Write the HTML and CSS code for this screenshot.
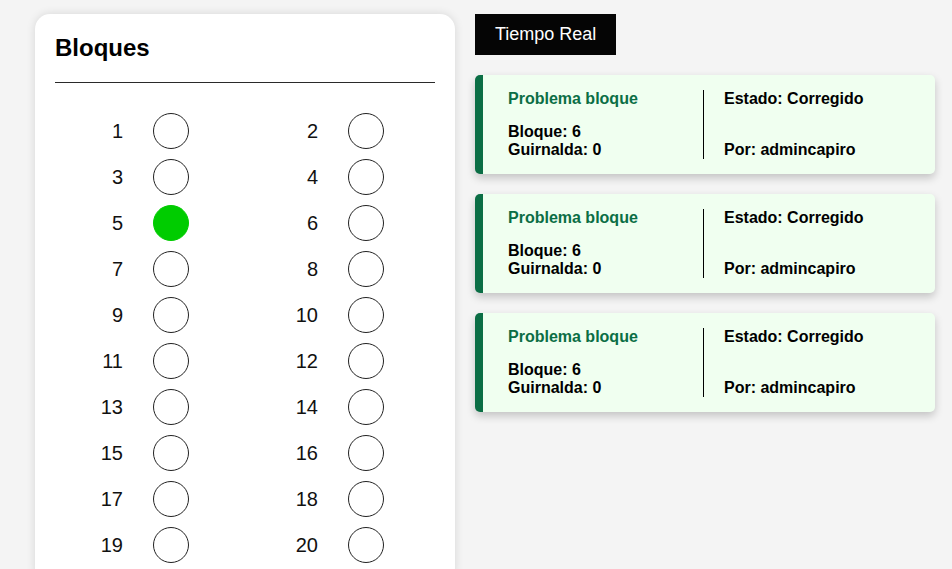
FILE: index.html
```html
<!DOCTYPE html>
<html lang="es">
<head>
<meta charset="utf-8">
<title>Bloques</title>
<link rel="stylesheet" href="styles.css">
</head>
<body>
<div class="page">
  <section class="panel">
    <h2 class="panel-title">Bloques</h2>
    <div class="divider"></div>
    <div class="blocks">
      <div class="block"><span class="num">1</span><span class="dot"></span></div>
      <div class="block"><span class="num">2</span><span class="dot"></span></div>
      <div class="block"><span class="num">3</span><span class="dot"></span></div>
      <div class="block"><span class="num">4</span><span class="dot"></span></div>
      <div class="block"><span class="num">5</span><span class="dot dot-on"></span></div>
      <div class="block"><span class="num">6</span><span class="dot"></span></div>
      <div class="block"><span class="num">7</span><span class="dot"></span></div>
      <div class="block"><span class="num">8</span><span class="dot"></span></div>
      <div class="block"><span class="num">9</span><span class="dot"></span></div>
      <div class="block"><span class="num">10</span><span class="dot"></span></div>
      <div class="block"><span class="num">11</span><span class="dot"></span></div>
      <div class="block"><span class="num">12</span><span class="dot"></span></div>
      <div class="block"><span class="num">13</span><span class="dot"></span></div>
      <div class="block"><span class="num">14</span><span class="dot"></span></div>
      <div class="block"><span class="num">15</span><span class="dot"></span></div>
      <div class="block"><span class="num">16</span><span class="dot"></span></div>
      <div class="block"><span class="num">17</span><span class="dot"></span></div>
      <div class="block"><span class="num">18</span><span class="dot"></span></div>
      <div class="block"><span class="num">19</span><span class="dot"></span></div>
      <div class="block"><span class="num">20</span><span class="dot"></span></div>
    </div>
  </section>
  <section class="feed">
    <button class="live-btn">Tiempo Real</button>
    <div class="card">
      <div class="card-left">
        <p class="card-title">Problema bloque</p>
        <p class="card-line">Bloque: 6</p>
        <p class="card-line">Guirnalda: 0</p>
      </div>
      <div class="card-right">
        <p class="card-line">Estado: Corregido</p>
        <p class="card-line">Por: admincapiro</p>
      </div>
    </div>
    <div class="card">
      <div class="card-left">
        <p class="card-title">Problema bloque</p>
        <p class="card-line">Bloque: 6</p>
        <p class="card-line">Guirnalda: 0</p>
      </div>
      <div class="card-right">
        <p class="card-line">Estado: Corregido</p>
        <p class="card-line">Por: admincapiro</p>
      </div>
    </div>
    <div class="card">
      <div class="card-left">
        <p class="card-title">Problema bloque</p>
        <p class="card-line">Bloque: 6</p>
        <p class="card-line">Guirnalda: 0</p>
      </div>
      <div class="card-right">
        <p class="card-line">Estado: Corregido</p>
        <p class="card-line">Por: admincapiro</p>
      </div>
    </div>
  </section>
</div>
</body>
</html>
```

FILE: styles.css
```css
html, body {
  margin: 0;
  padding: 0;
  background: #f4f4f4;
  font-family: "Liberation Sans", Arial, sans-serif;
  color: #000;
}

.page {
  display: flex;
  align-items: flex-start;
  gap: 20px;
  padding: 14px 17px 0 35px;
}

.panel {
  width: 420px;
  box-sizing: border-box;
  background: #fff;
  border-radius: 15px;
  padding: 20px 20px 20px 20px;
  box-shadow: 0 0 10px rgba(0, 0, 0, 0.12);
}

.panel-title {
  margin: 0;
  font-size: 24px;
  font-weight: bold;
  line-height: normal;
}

.divider {
  height: 1px;
  background: #2a2a2a;
  margin-top: 20px;
}

.blocks {
  display: grid;
  grid-template-columns: 107px 107px;
  column-gap: 88px;
  row-gap: 10px;
  margin: 30px 0 0 27px;
}

.block {
  display: flex;
  align-items: center;
}

.num {
  width: 41px;
  text-align: right;
  font-size: 20px;
  margin-right: 30px;
  color: #111;
}

.dot {
  width: 36px;
  height: 36px;
  box-sizing: border-box;
  border: 1px solid #222;
  border-radius: 50%;
  background: #fff;
}

.dot-on {
  background: #00cc00;
  border-color: #00cc00;
}

.feed {
  width: 460px;
  display: flex;
  flex-direction: column;
  align-items: flex-start;
  gap: 20px;
}

.live-btn {
  background: #050505;
  color: #fff;
  border: none;
  border-radius: 0;
  padding: 10px 20px;
  font-family: "Liberation Sans", Arial, sans-serif;
  font-size: 18px;
  line-height: normal;
  cursor: pointer;
}

.card {
  align-self: stretch;
  display: flex;
  background: #f0fff0;
  border-left: 8px solid #0b6e45;
  border-radius: 5px;
  padding: 15px 25px;
  box-shadow: 0 4px 8px rgba(0, 0, 0, 0.2);
}

.card p {
  margin: 0;
  font-size: 16px;
  font-weight: bold;
  line-height: normal;
}

.card-left {
  width: 195px;
  border-right: 1px solid #000;
}

.card-title {
  color: #0b6e45;
}

.card-left .card-title {
  margin-bottom: 15px;
}

.card-right {
  padding-left: 20px;
  display: flex;
  flex-direction: column;
  justify-content: space-between;
}
```
